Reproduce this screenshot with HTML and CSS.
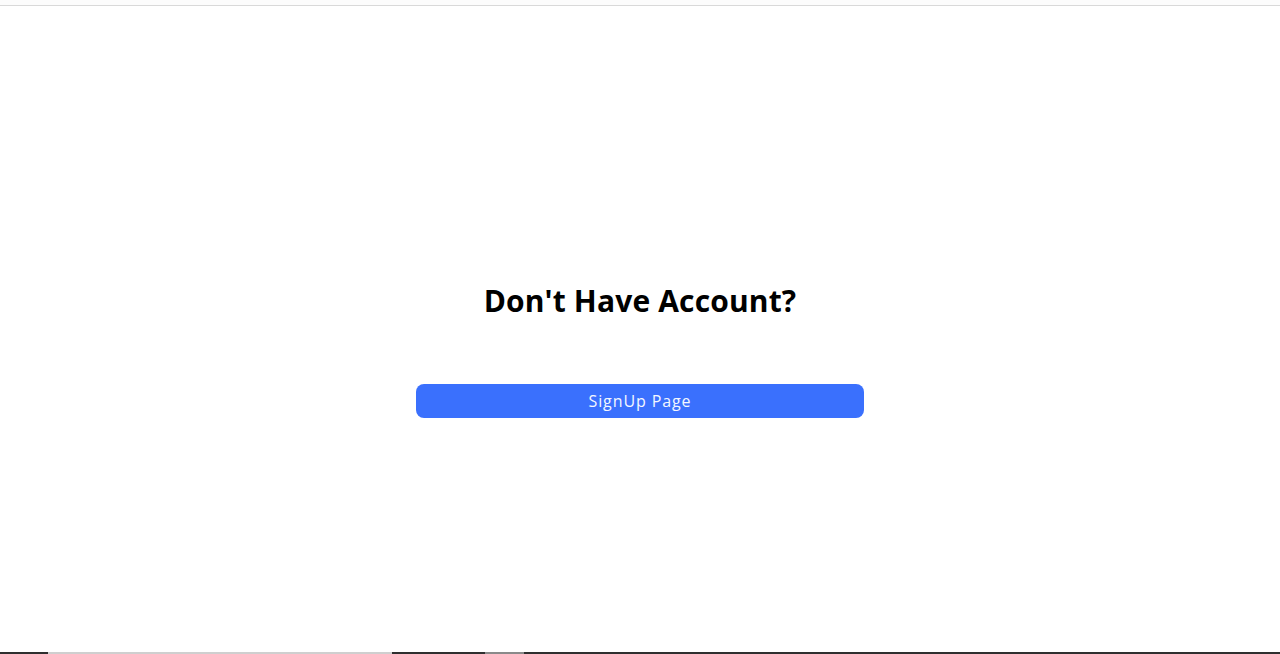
FILE: index.html
```html
<!DOCTYPE html>
<html lang="en">
<head>
<meta charset="utf-8">
<title>Sign Up</title>
<link rel="stylesheet" href="styles.css">
</head>
<body>
<div class="page">
  <div class="topline"></div>
  <main class="content">
    <h1 class="title">Don't Have Account?</h1>
    <button class="signup" type="button">SignUp Page</button>
  </main>
  <div class="bottombar">
    <span class="seg dark" style="width:48px"></span>
    <span class="seg light" style="width:344px"></span>
    <span class="seg dark" style="width:93px"></span>
    <span class="seg mid" style="width:39px"></span>
    <span class="seg dark rest"></span>
  </div>
</div>
</body>
</html>
```
FILE: styles.css
```css
html, body {
  margin: 0;
  padding: 0;
  background: #ffffff;
}
.page {
  height: 654px;
  display: flex;
  flex-direction: column;
}
.topline {
  height: 5px;
  border-bottom: 1px solid #d9d9d9;
  background: #fcfcfc;
  flex: none;
}
.content {
  flex: 1;
  display: flex;
  flex-direction: column;
  align-items: center;
  padding-top: 271px;
}
.title {
  margin: 0;
  font-family: "Open Sans", "Liberation Sans", sans-serif;
  font-weight: 700;
  font-size: 30px;
  line-height: 48px;
  color: #000;
  letter-spacing: 0.15px;
}
.signup {
  margin-top: 59px;
  width: 448px;
  height: 34px;
  border: none;
  border-radius: 8px;
  background: #3a70fd;
  color: #f4f7ff;
  font-family: "Open Sans", "Liberation Sans", sans-serif;
  font-size: 16px;
  letter-spacing: 0.9px;
  cursor: pointer;
}
.bottombar {
  flex: none;
  height: 2px;
  display: flex;
}
.seg { display: block; height: 2px; }
.seg.dark { background: #2f2f2f; }
.seg.light { background: #cfcfcf; }
.seg.mid { background: #8a8a8a; }
.seg.rest { flex: 1; }
```
